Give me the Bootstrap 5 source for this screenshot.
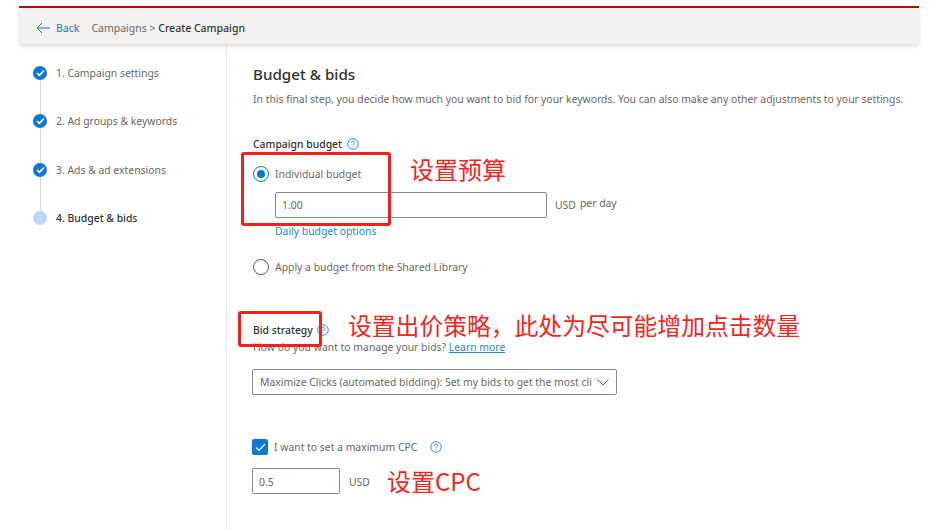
<!DOCTYPE html>
<html lang="en">
<head>
    <meta charset="UTF-8">
    <title>Create Campaign</title>
    <link href="https://cdn.jsdelivr.net/npm/bootstrap@5.3.3/dist/css/bootstrap.min.css" rel="stylesheet">
    <style>
        html, body { height: 530px; overflow: hidden; }
        body { background: #fff; font-family: "Noto Sans", "Liberation Sans", sans-serif; font-size: 10.4px; color: #686664; line-height: 14px; }
        .page-frame { width: 900px; margin: 6px 0 0 19px; height: 524px; display: flex; flex-direction: column; }
        .top-head { height: 38px; flex: none; background: #f3f2f1; border-top: 2px solid #b00d12; box-shadow: 0 2px 4px rgb(0 0 0 / 0.14); padding: 3px 0 0 17px; position: relative; z-index: 2; font-size: 10.5px; }
        .back-link { color: #1a75c0; margin: 0 12px 0 6px; }
        .crumb-now { color: #323130; font-weight: 500; }
        .wizard-side { width: 208px; flex: none; border-right: 1px solid #e6e6e6; padding: 22px 0 0 14px; }
        .step-row { height: 48.4px; position: relative; padding-left: 23px; }
        .step-row:not(:last-child)::before { content: ""; position: absolute; left: 7px; top: 10px; height: 48px; width: 1px; background: #d6d6d6; }
        .step-dot { position: absolute; left: 0; top: 0; width: 14px; height: 14px; border-radius: 50%; background: #0f78d4; display: flex; align-items: center; justify-content: center; }
        .step-dot.is-current { background: #bcd9f3; }
        .step-now { color: #323130; font-weight: 500; }
        .main-pane { position: relative; padding: 20px 0 0 26px; flex: 1; }
        .pane-title { font-size: 15.2px; font-weight: 500; color: #323130; line-height: 20px; margin: 0 0 8px; }
        .field-title { color: #323130; font-weight: 500; }
        .budget-head { margin-top: 31px; }
        .bid-head { margin-top: 48px; }
        .help-mark { display: inline-block; vertical-align: -2px; margin-left: 2px; }
        .radio-row { height: 16px; gap: 6px; }
        .radio-first { margin-top: 15px; }
        .radio-second { margin-top: 21px; }
        .radio-ring { width: 16px; height: 16px; flex: none; border: 1px solid #605e5c; border-radius: 50%; display: block; }
        .radio-ring.is-on { border-color: #0f78d4; padding: 3px; }
        .radio-ring.is-on i { display: block; width: 8px; height: 8px; border-radius: 50%; background: #0f78d4; }
        .budget-line { margin: 10px 0 0 22px; }
        .budget-link { margin: 6px 0 0 22px; }
        .txt-field { border: 1px solid #8a8886; border-radius: 2px; height: 26px; padding: 0 6px; display: flex; align-items: center; background: #fff; }
        .budget-field { width: 272px; }
        .cpc-field { width: 88px; padding-top: 2px; }
        .blue-link { color: #2a85cb; text-decoration: none; }
        .blue-under { color: #2a85cb; text-decoration: underline; }
        .manage-line { margin-top: 3px; }
        .select-field { width: 365px; height: 26px; margin: 15px 0 0 -1px; border: 1px solid #8a8886; border-radius: 2px; padding: 0 7px; display: flex; align-items: center; justify-content: space-between; white-space: nowrap; }
        .cpc-check { height: 16px; gap: 6px; margin: 44px 0 0 -1px; }
        .check-box { width: 16px; height: 16px; flex: none; background: #0f78d4; border-radius: 2px; display: flex; align-items: center; justify-content: center; }
        .cpc-help { margin-left: 7px; }
        .cpc-line { margin: 13px 0 0 -1px; }
        .cpc-unit { margin: 2px 0 0 9px; }
        .mark-box { position: absolute; border: 3px solid #f0201c; border-radius: 3px; }
        .mark-budget { left: 14px; top: 108px; width: 150px; height: 74px; }
        .mark-bid { left: 11px; top: 267px; width: 84px; height: 36px; }
        .note-text { position: absolute; color: #f0261f; font-family: "Noto Sans CJK SC", "Noto Sans", sans-serif; font-size: 24px; white-space: nowrap; line-height: 24px; }
        .note-budget { left: 183px; top: 113px; }
        .note-bid { left: 121px; top: 269px; font-size: 23.8px; }
        .note-cpc { left: 160px; top: 425px; }
    </style>
</head>
<body>
<div class="page-frame">
    <div class="top-head d-flex align-items-center">
        <svg width="14" height="12" viewBox="0 0 14 12" fill="none" stroke="#1a75c0" stroke-width="1"><path d="M14 6H1M6 1 1 6l5 5"/></svg>
        <span class="back-link">Back</span>
        <span>Campaigns &gt; <span class="crumb-now">Create Campaign</span></span>
    </div>
    <div class="d-flex flex-grow-1">
        <div class="wizard-side">
            <div class="step-row"><span class="step-dot"><svg width="9" height="8" viewBox="0 0 9 8" fill="none" stroke="#fff" stroke-width="1.6"><path d="M1 4l2.4 2.4L8 1.5"/></svg></span>1. Campaign settings</div>
            <div class="step-row"><span class="step-dot"><svg width="9" height="8" viewBox="0 0 9 8" fill="none" stroke="#fff" stroke-width="1.6"><path d="M1 4l2.4 2.4L8 1.5"/></svg></span>2. Ad groups &amp; keywords</div>
            <div class="step-row"><span class="step-dot"><svg width="9" height="8" viewBox="0 0 9 8" fill="none" stroke="#fff" stroke-width="1.6"><path d="M1 4l2.4 2.4L8 1.5"/></svg></span>3. Ads &amp; ad extensions</div>
            <div class="step-row"><span class="step-dot is-current"></span><span class="step-now">4. Budget &amp; bids</span></div>
        </div>
        <div class="main-pane">
            <h1 class="pane-title">Budget &amp; bids</h1>
            <div>In this final step, you decide how much you want to bid for your keywords. You can also make any other adjustments to your settings.</div>

            <div class="field-title budget-head">Campaign budget
                <svg class="help-mark" width="12" height="12" viewBox="0 0 12 12" fill="none" stroke="#3d8fd1"><circle cx="6" cy="6" r="5.3"/><path d="M4.3 4.7c0-2.2 3.4-2.2 3.4 0 0 1.3-1.7 1.3-1.7 2.6M6 8.3v1"/></svg>
            </div>
            <div class="radio-row radio-first d-flex align-items-center"><span class="radio-ring is-on"><i></i></span>Individual budget</div>
            <div class="budget-line d-flex align-items-center">
                <div class="txt-field budget-field">1.00</div>
                <span class="ms-2">USD</span><span class="ms-1 mb-1">per day</span>
            </div>
            <div class="budget-link"><a class="blue-link" href="#">Daily budget options</a></div>
            <div class="radio-row radio-second d-flex align-items-center"><span class="radio-ring"></span>Apply a budget from the Shared Library</div>

            <div class="field-title bid-head">Bid strategy
                <svg class="help-mark" width="12" height="12" viewBox="0 0 12 12" fill="none" stroke="#3d8fd1"><circle cx="6" cy="6" r="5.3"/><path d="M4.3 4.7c0-2.2 3.4-2.2 3.4 0 0 1.3-1.7 1.3-1.7 2.6M6 8.3v1"/></svg>
            </div>
            <div class="manage-line">How do you want to manage your bids? <a class="blue-under" href="#">Learn more</a></div>
            <div class="select-field">
                <span>Maximize Clicks (automated bidding): Set my bids to get the most cli</span>
                <svg width="12" height="7" viewBox="0 0 12 7" fill="none" stroke="#605e5c"><path d="M.5.5 6 6 11.5.5"/></svg>
            </div>

            <div class="cpc-check d-flex align-items-center"><span class="check-box"><svg width="11" height="9" viewBox="0 0 11 9" fill="none" stroke="#fff" stroke-width="1.2"><path d="M1 4.5 4 7.5 10 1"/></svg></span>I want to set a maximum CPC
                <svg class="cpc-help" width="12" height="12" viewBox="0 0 12 12" fill="none" stroke="#3d8fd1"><circle cx="6" cy="6" r="5.3"/><path d="M4.3 4.7c0-2.2 3.4-2.2 3.4 0 0 1.3-1.7 1.3-1.7 2.6M6 8.3v1"/></svg>
            </div>
            <div class="cpc-line d-flex align-items-center">
                <div class="txt-field cpc-field">0.5</div>
                <span class="cpc-unit">USD</span>
            </div>

            <div class="mark-box mark-budget"></div>
            <div class="mark-box mark-bid"></div>
            <div class="note-text note-budget">设置预算</div>
            <div class="note-text note-bid">设置出价策略，此处为尽可能增加点击数量</div>
            <div class="note-text note-cpc">设置CPC</div>
        </div>
    </div>
</div>
<script src="https://cdn.jsdelivr.net/npm/bootstrap@5.3.3/dist/js/bootstrap.bundle.min.js"></script>
</body>
</html>
